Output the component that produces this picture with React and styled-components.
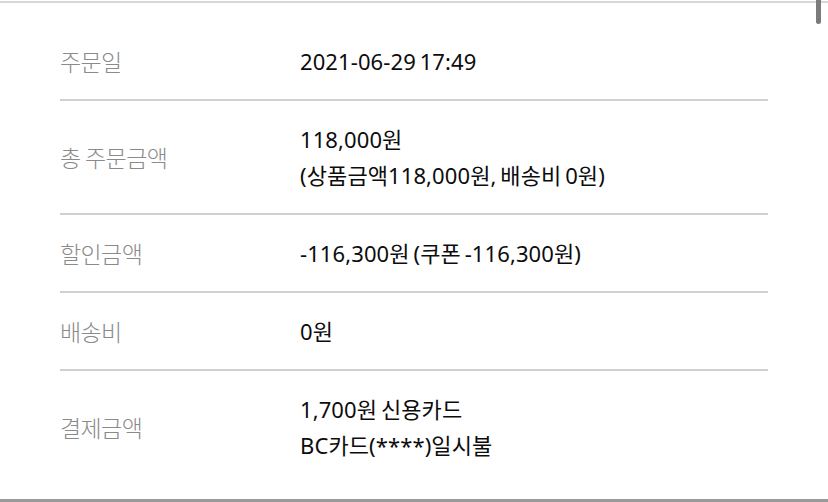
import React from "react";
import styled, { createGlobalStyle } from "styled-components";

const Global = createGlobalStyle`
  html, body { margin: 0; padding: 0; background: #fff; }
  body { font-family: "Noto Sans", "Noto Sans CJK KR", sans-serif; overflow: hidden; }
`;

const Page = styled.div`
  width: 828px;
  height: 502px;
  box-sizing: border-box;
  padding-top: 1px;
  position: relative;
  display: flex;
  flex-direction: column;
`;

const Panel = styled.section`
  flex: 1;
  border-top: 2px solid #d7d7d7;
  border-bottom: 4px solid #9a9a9a;
  padding: 20px 60px 16px;
`;

const Row = styled.div`
  display: grid;
  grid-template-columns: 240px 1fr;
  align-items: center;
  padding: 20px 0;
  border-bottom: ${(p) => (p.$last ? "none" : "2px solid #d0d0d0")};
`;

const Label = styled.div`
  font-family: "Noto Sans CJK KR", sans-serif;
  font-weight: 300;
  font-size: 23px;
  letter-spacing: -0.6px;
  line-height: 36px;
  color: #8a8a8a;
`;

const Value = styled.div`
  font-family: "Noto Sans", "Noto Sans CJK KR", sans-serif;
  font-weight: 400;
  font-size: 22px;
  letter-spacing: 0.1px;
  word-spacing: -2px;
  line-height: 36px;
  color: #0c0c0c;
`;

const Scrollbar = styled.div`
  position: absolute;
  top: 0;
  right: 7px;
  width: 5px;
  height: 24px;
  background: #7b7b7b;
  border-radius: 0 0 3px 3px;
`;

const rows = [
  { label: "주문일", value: ["2021-06-29 17:49"] },
  { label: "총 주문금액", value: ["118,000원", "(상품금액118,000원, 배송비 0원)"] },
  { label: "할인금액", value: ["-116,300원 (쿠폰 -116,300원)"] },
  { label: "배송비", value: ["0원"] },
  { label: "결제금액", value: ["1,700원 신용카드", "BC카드(****)일시불"] },
];

export default function App() {
  return (
    <>
      <Global />
      <Page>
        <Panel>
          {rows.map((r, i) => (
            <Row key={r.label} $last={i === rows.length - 1}>
              <Label>{r.label}</Label>
              <Value>
                {r.value.map((v) => (
                  <div key={v}>{v}</div>
                ))}
              </Value>
            </Row>
          ))}
        </Panel>
        <Scrollbar />
      </Page>
    </>
  );
}
